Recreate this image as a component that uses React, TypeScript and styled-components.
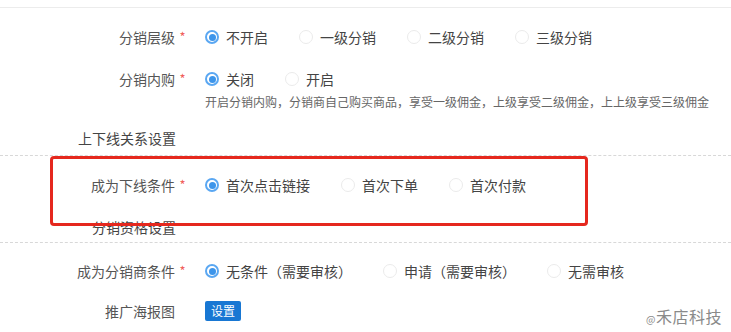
import React from 'react';
import styled, { createGlobalStyle } from 'styled-components';

const GlobalStyle = createGlobalStyle`
  body {
    margin: 0;
    background: #fff;
    font-family: "Noto Sans CJK SC", "Noto Sans", sans-serif;
  }
`;

const Page = styled.div`
  position: relative;
  width: 731px;
  height: 332px;
  padding-top: 7px;
  box-sizing: border-box;
  overflow: hidden;
`;

const Form = styled.div`
  border-top: 1px solid #ececec;
`;

const Field = styled.div<{ $top: number }>`
  display: grid;
  grid-template-columns: 190px 1fr;
  column-gap: 15px;
  margin-top: ${p => p.$top}px;
`;

const Label = styled.div`
  display: flex;
  justify-content: flex-end;
  height: 30px;
  line-height: 30px;
  font-size: 14px;
  color: #555;
  white-space: nowrap;
`;

const Star = styled.span<{ $show: boolean }>`
  width: 15px;
  text-align: center;
  color: #f0605a;
  font-size: 13px;
  visibility: ${p => (p.$show ? 'visible' : 'hidden')};
`;

const Options = styled.div`
  display: flex;
  align-items: center;
  height: 30px;
`;

const Option = styled.label`
  display: inline-flex;
  align-items: center;
  gap: 7px;
  margin-right: 31px;
  font-size: 14px;
  color: #444;
  white-space: nowrap;
`;

const Dot = styled.span<{ $on: boolean }>`
  position: relative;
  width: 14px;
  height: 14px;
  border-radius: 50%;
  box-sizing: border-box;
  background: #fff;
  border: ${p => (p.$on ? '2px solid #5aa7f2' : '1px solid #ebebeb')};

  &::after {
    content: '';
    display: ${p => (p.$on ? 'block' : 'none')};
    position: absolute;
    left: 1.5px;
    top: 1.5px;
    width: 7px;
    height: 7px;
    border-radius: 50%;
    background: #3d95ea;
  }
`;

const Hint = styled.div`
  font-size: 12px;
  line-height: 16px;
  color: #666;
  white-space: nowrap;
`;

const SectionBar = styled.div<{ $top: number; $pad: number }>`
  margin-top: ${p => p.$top}px;
  padding-bottom: ${p => p.$pad}px;
  border-bottom: 1px dashed #d8d8d8;
`;

const SectionTitle = styled.div`
  width: 176px;
  text-align: right;
  font-size: 14px;
  line-height: 20px;
  color: #444;
`;

const Button = styled.button`
  align-self: center;
  height: 20px;
  padding: 0 6px;
  border: none;
  border-radius: 2px;
  background: #1877d3;
  color: #fff;
  font-family: inherit;
  font-size: 12px;
  line-height: 20px;
`;

const Content = styled.div`
  display: flex;
  align-items: center;
  height: 30px;
`;

const Highlight = styled.div`
  position: absolute;
  left: 50px;
  top: 156px;
  width: 538px;
  height: 70px;
  box-sizing: border-box;
  border: 3px solid #e5281e;
  border-radius: 4px;
  pointer-events: none;
`;

const Watermark = styled.div`
  position: absolute;
  right: 9px;
  bottom: 4px;
  font-size: 16px;
  color: #8a8a8a;
  text-shadow: 0 0 2px #fff;
  letter-spacing: 0.5px;

  small {
    font-size: 10px;
  }
`;

type Choice = { text: string; on?: boolean };

const Radios = ({ items }: { items: Choice[] }) => (
  <Options>
    {items.map(it => (
      <Option key={it.text}>
        <Dot $on={!!it.on} />
        {it.text}
      </Option>
    ))}
  </Options>
);

const FieldLabel = ({ text, required }: { text: string; required?: boolean }) => (
  <Label>
    {text}
    <Star $show={!!required}>*</Star>
  </Label>
);

export default function App() {
  return (
    <Page>
      <GlobalStyle />
      <Form>
        <Field $top={14}>
          <FieldLabel text="分销层级" required />
          <Radios
            items={[
              { text: '不开启', on: true },
              { text: '一级分销' },
              { text: '二级分销' },
              { text: '三级分销' },
            ]}
          />
        </Field>

        <Field $top={12}>
          <FieldLabel text="分销内购" required />
          <div>
            <Radios items={[{ text: '关闭', on: true }, { text: '开启' }]} />
            <Hint>开启分销内购，分销商自己购买商品，享受一级佣金，上级享受二级佣金，上上级享受三级佣金</Hint>
          </div>
        </Field>

        <SectionBar $top={18} $pad={7}>
          <SectionTitle>上下线关系设置</SectionTitle>
        </SectionBar>

        <Field $top={14}>
          <FieldLabel text="成为下线条件" required />
          <Radios
            items={[
              { text: '首次点击链接', on: true },
              { text: '首次下单' },
              { text: '首次付款' },
            ]}
          />
        </Field>

        <SectionBar $top={17} $pad={5}>
          <SectionTitle>分销资格设置</SectionTitle>
        </SectionBar>

        <Field $top={13}>
          <FieldLabel text="成为分销商条件" required />
          <Radios
            items={[
              { text: '无条件（需要审核）', on: true },
              { text: '申请（需要审核）' },
              { text: '无需审核' },
            ]}
          />
        </Field>

        <Field $top={10}>
          <FieldLabel text="推广海报图" />
          <Content>
            <Button>设置</Button>
          </Content>
        </Field>
      </Form>

      <Highlight />
      <Watermark>
        <small>@</small>禾店科技
      </Watermark>
    </Page>
  );
}
